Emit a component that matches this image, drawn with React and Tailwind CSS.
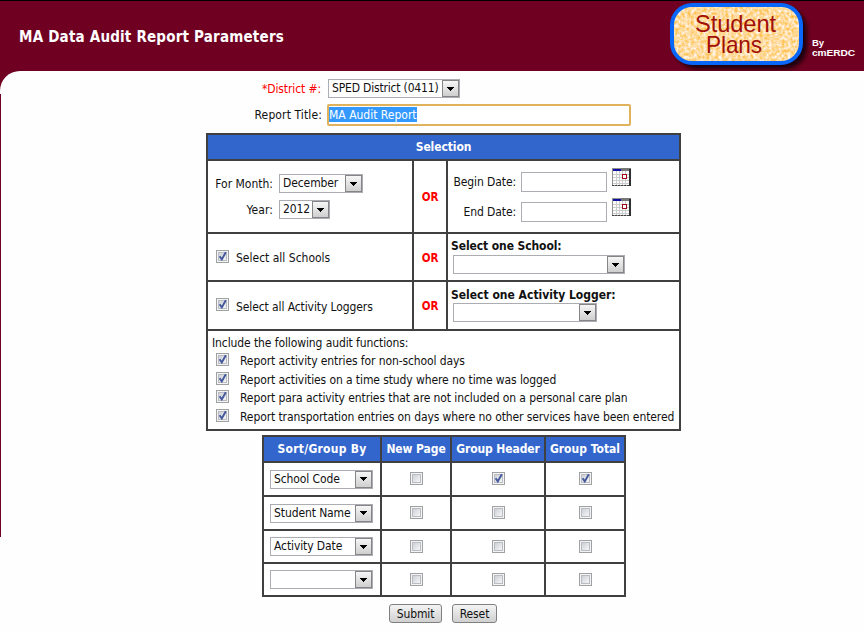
import React from "react";

function Arrow() {
  return (
    <span className="flex h-full w-[17px] shrink-0 items-center justify-center border border-[#858588] bg-linear-to-b from-[#f6f6f6] to-[#cfcfcf]">
      <svg width="7" height="4" viewBox="0 0 7 4" shapeRendering="crispEdges">
        <path d="M0 0H7V1H6V2H5V3H4V4H3V3H2V2H1V1H0Z" fill="#000" />
      </svg>
    </span>
  );
}

function Select({ className, children }) {
  return (
    <div className={"flex h-[19px] shrink-0 items-center border border-[#abadb3] bg-white " + className}>
      <span className="w-0 grow pl-[3px] leading-[15px] whitespace-nowrap">{children}</span>
      <Arrow />
    </div>
  );
}

function Check({ on, className = "" }) {
  return (
    <span className={"flex h-[13px] w-[13px] shrink-0 border border-[#a0a1a3] bg-[#f4f4f4] p-px " + className}>
      <span className="relative h-[9px] w-[9px] border border-[#b9bcc3] bg-linear-to-br from-[#cdd0d6] to-[#f6f6f6]">
        {on && (
          <svg className="absolute -top-[2px] -left-px" width="10" height="10" viewBox="0 0 10 10">
            <path d="M1.6 5.2L3.8 8.4L7.8 1.2" fill="none" stroke="#42589b" strokeWidth="1.9" />
          </svg>
        )}
      </span>
    </span>
  );
}

function Calendar() {
  return (
    <svg width="19" height="18" viewBox="0 0 19 18" shapeRendering="crispEdges">
      <rect width="19" height="18" fill="#909090" />
      <rect x="1" y="3" width="16" height="14" fill="#fff" />
      <rect x="9" y="0" width="10" height="3" fill="#777" />
      <rect x="1" y="1" width="8" height="2" fill="#1010a0" />
      <path d="M4.5 3V17M7.5 3V17M10.5 3V17M13.5 3V17M1 6.5H17M1 9.5H17M1 12.5H17M1 15.5H17" stroke="#ccc" />
      <path fillRule="evenodd" d="M10 6H15V11H10ZM11 7V10H14V7Z" fill="#a00818" />
      <rect x="11" y="7" width="3" height="3" fill="#fff" />
      <path d="M0 17.5H18" stroke="#404040" strokeDasharray="2 1" />
      <path d="M18 1V18" stroke="#303030" strokeWidth="2" />
    </svg>
  );
}

function Logo() {
  return (
    <svg width="204" height="71" viewBox="0 0 204 71">
      <defs>
        <filter id="soft" x="-10%" y="-10%" width="120%" height="130%">
          <feGaussianBlur stdDeviation="2.2" />
        </filter>
        <filter id="sand" x="0" y="0" width="100%" height="100%" colorInterpolationFilters="sRGB">
          <feTurbulence type="fractalNoise" baseFrequency="0.32" numOctaves="2" seed="4" />
          <feColorMatrix values="0 0 0 0 1  0.4 0 0 0 0.66  1.2 0 0 0 0.02  0 0 0 0 1" />
          <feComposite in2="SourceGraphic" operator="in" />
        </filter>
      </defs>
      <rect x="15" y="8" width="132" height="61" rx="22" fill="#1c0008" filter="url(#soft)" />
      <rect x="10" y="3" width="133" height="62" rx="22" fill="#0866f8" />
      <rect x="14" y="7" width="125" height="54" rx="18" fill="#ffd890" filter="url(#sand)" />
      <g fill="#a01008" fontFamily="Liberation Sans, sans-serif" fontSize="24">
        <text x="35" y="32" textLength="81" lengthAdjust="spacingAndGlyphs">Student</text>
        <text x="46" y="53" textLength="56" lengthAdjust="spacingAndGlyphs">Plans</text>
      </g>
      <g fill="#fff" fontFamily="Liberation Sans, sans-serif" fontSize="9" fontWeight="bold">
        <text x="152" y="46" textLength="12" lengthAdjust="spacingAndGlyphs">By</text>
        <text x="152" y="56" textLength="43" lengthAdjust="spacingAndGlyphs">cmERDC</text>
      </g>
    </svg>
  );
}

const audits = [
  "Report activity entries for non-school days",
  "Report activities on a time study where no time was logged",
  "Report para activity entries that are not included on a personal care plan",
  "Report transportation entries on days where no other services have been entered",
];

const headings = [
  ["Sort/Group By", "tracking-[0.25px]"],
  ["New Page", "tracking-[-0.1px]"],
  ["Group Header", "tracking-[-0.1px]"],
  ["Group Total", "tracking-[0px]"],
];

const sorts = [
  ["School Code", true],
  ["Student Name", false],
  ["Activity Date", false],
  ["", false],
];

function Or() {
  return <div className="flex items-center justify-center bg-white pt-px text-[11.5px] font-bold text-[#f00]">OR</div>;
}

export default function App() {
  return (
    <div className="h-[632px] w-[864px] overflow-hidden bg-[#fefefe] font-['DejaVu_Sans_Condensed','DejaVu_Sans',sans-serif] text-[12px] leading-[14px] tracking-[-0.1px] text-[#111] [font-stretch:condensed]">
      <header className="flex h-[71px] justify-between border-t border-black bg-[#700022]">
        <h1 className="pt-[26px] pl-[19px] font-['Comic_Sans_MS','DejaVu_Sans',sans-serif] text-[15px] leading-[20px] font-bold tracking-[0.2px] whitespace-nowrap text-white">
          MA Data Audit Report Parameters
        </h1>
        <div className="-mt-px"><Logo /></div>
      </header>
      <main className="h-[466px] bg-[#700022]">
        <div className="relative h-full rounded-tl-[20px] bg-[#fefefe] pt-[8px]">
          <span className="absolute top-[23px] bottom-0 left-0 w-px bg-[#700022]" />
          <div className="flex">
            <div className="w-[321px] pt-[3px] text-right text-[#f00]">*District #:</div>
            <Select className="ml-[7px] w-[132px] tracking-[-0.18px]">SPED District (0411)</Select>
          </div>
          <div className="mt-[6px] flex">
            <div className="w-[322px] pt-[4px] text-right tracking-[0.12px]">Report Title:</div>
            <div className="ml-[5px] h-[22px] w-[304px] rounded-[2px] border-2 border-[#e0b25c] bg-white pt-px">
              <span className="inline-block h-[15px] bg-[#3399ff] leading-[16px] tracking-[0px] text-white">MA Audit Report</span>
            </div>
          </div>
          <section className="mt-[7px] ml-[206px] grid w-[475px] grid-cols-[204px_32px_231px] grid-rows-[24px_71px_46px_47px_98px] gap-[2px] border-2 border-[#404040] bg-[#404040]">
            <div className="col-span-3 bg-[#3366cc] text-center leading-[24px] font-bold text-white">Selection</div>
            <div className="bg-white pt-[13px]">
              <div className="flex">
                <span className="w-[65px] pt-[3px] text-right tracking-[0px]">For Month:</span>
                <Select className="ml-[6px] w-[84px]">December</Select>
              </div>
              <div className="mt-[7px] flex">
                <span className="w-[65px] pt-[3px] text-right tracking-[0.1px]">Year:</span>
                <Select className="ml-[6px] w-[51px]">2012</Select>
              </div>
            </div>
            <Or />
            <div className="flex flex-col gap-[12px] bg-white pt-[7px]">
              {["Begin Date:", "End Date:"].map((t) => (
                <div key={t} className="flex h-[18px]">
                  <span className="w-[68px] pt-[7px] text-right">{t}</span>
                  <span className="mt-[4px] ml-[5px] h-[20px] w-[86px] border border-[#abadb3] bg-white" />
                  <span className="ml-[5px]"><Calendar /></span>
                </div>
              ))}
            </div>
            <div className="flex bg-white pt-[16px] pl-[8px]">
              <Check on />
              <span className="mt-px ml-[7px] tracking-[0px]">Select all Schools</span>
            </div>
            <Or />
            <div className="bg-white pt-[5px] pl-[4px]">
              <div className="-ml-px font-bold">Select one School:</div>
              <Select className="mt-[2px] ml-px w-[172px]" />
            </div>
            <div className="flex bg-white pt-[16px] pl-[8px]">
              <Check on />
              <span className="mt-[2px] ml-[7px]">Select all Activity Loggers</span>
            </div>
            <Or />
            <div className="bg-white pt-[6px] pl-[4px]">
              <div className="-ml-px font-bold tracking-[0px]">Select one Activity Logger:</div>
              <Select className="mt-px ml-px w-[144px]" />
            </div>
            <div className="col-span-3 bg-white pt-[5px] pl-[4px]">
              <div className="h-[17px]">Include the following audit functions:</div>
              {audits.map((t) => (
                <div key={t} className="flex h-[18.7px] pl-[4px] whitespace-nowrap">
                  <Check on />
                  <span className="mt-px ml-[11px]">{t}</span>
                </div>
              ))}
            </div>
          </section>
          <section className="mt-[4px] ml-[262px] grid w-[364px] grid-cols-[116px_68px_92px_78px] grid-rows-[24px_32px_32px_31px_31px] gap-[2px] border-2 border-[#404040] bg-[#404040]">
            {headings.map(([t, track]) => (
              <div key={t} className={"bg-[#3366cc] text-center leading-[25px] font-bold whitespace-nowrap text-white " + track}>{t}</div>
            ))}
            {sorts.map(([t, on], i) => (
              <React.Fragment key={i}>
                <div className="flex items-center bg-white pl-[6px]"><Select className="w-[103px]">{t}</Select></div>
                <div className="flex justify-center bg-white pt-[9px]"><Check /></div>
                <div className="flex justify-center bg-white pt-[9px]"><Check on={on} /></div>
                <div className="flex justify-center bg-white pt-[9px]"><Check on={on} /></div>
              </React.Fragment>
            ))}
          </section>
          <div className="mt-[7px] ml-[389px] flex gap-[10px]">
            <button className="h-[19px] w-[53px] rounded-[3px] border border-[#808080] bg-linear-to-b from-[#f4f4f4] to-[#d0d0d0] leading-[16px]">Submit</button>
            <button className="h-[19px] w-[45px] rounded-[3px] border border-[#808080] bg-linear-to-b from-[#f4f4f4] to-[#d0d0d0] leading-[16px]">Reset</button>
          </div>
        </div>
      </main>
    </div>
  );
}
